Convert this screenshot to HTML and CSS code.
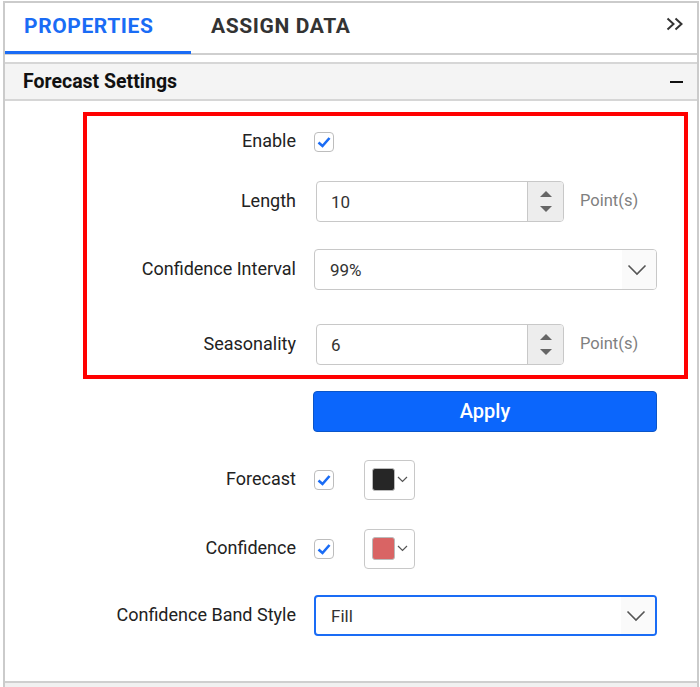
FILE: index.html
```html
<!DOCTYPE html>
<html>
<head>
<meta charset="utf-8">
<link rel="stylesheet" href="styles.css">
</head>
<body>
<div class="panel">
  <div class="tabs">
    <div class="tab tab-active">PROPERTIES</div>
    <div class="tab tab-second">ASSIGN DATA</div>
    <div class="collapse">
      <svg width="18" height="14" viewBox="0 0 18 14"><path d="M1.5 1.5 L7.5 7 L1.5 12.5 M9.5 1.5 L15.5 7 L9.5 12.5" fill="none" stroke="#333" stroke-width="2"/></svg>
    </div>
  </div>
  <div class="section-head">
    <span class="section-title">Forecast Settings</span>
    <span class="minus"></span>
  </div>
  <div class="form">
    <div class="row r-enable">
      <div class="label">Enable</div>
      <div class="control"><span class="check"><svg width="14" height="12" viewBox="0 0 14 12"><path d="M1.5 6.5 L5.5 10 L12.5 2" fill="none" stroke="#1a6cf5" stroke-width="2.6"/></svg></span></div>
    </div>
    <div class="row r-length">
      <div class="label">Length</div>
      <div class="control">
        <div class="numeric">
          <span class="num-val">10</span>
          <span class="spin"><span class="tri-up"></span><span class="tri-down"></span></span>
        </div>
        <span class="unit">Point(s)</span>
      </div>
    </div>
    <div class="row r-ci">
      <div class="label">Confidence Interval</div>
      <div class="control">
        <div class="dropdown">
          <span class="dd-val">99%</span>
          <span class="dd-icon"><svg width="20" height="12" viewBox="0 0 20 12"><path d="M1.5 1.5 L10 10 L18.5 1.5" fill="none" stroke="#555" stroke-width="1.6"/></svg></span>
        </div>
      </div>
    </div>
    <div class="row r-season">
      <div class="label">Seasonality</div>
      <div class="control">
        <div class="numeric">
          <span class="num-val">6</span>
          <span class="spin"><span class="tri-up"></span><span class="tri-down"></span></span>
        </div>
        <span class="unit">Point(s)</span>
      </div>
    </div>
    <div class="row r-apply">
      <div class="label"></div>
      <div class="control"><button class="apply">Apply</button></div>
    </div>
    <div class="row r-forecast">
      <div class="label">Forecast</div>
      <div class="control">
        <span class="check"><svg width="14" height="12" viewBox="0 0 14 12"><path d="M1.5 6.5 L5.5 10 L12.5 2" fill="none" stroke="#1a6cf5" stroke-width="2.6"/></svg></span>
        <div class="picker"><span class="swatch swatch-dark"></span><svg width="11" height="7" viewBox="0 0 11 7"><path d="M1 1 L5.5 5.5 L10 1" fill="none" stroke="#555" stroke-width="1.2"/></svg></div>
      </div>
    </div>
    <div class="row r-conf">
      <div class="label">Confidence</div>
      <div class="control">
        <span class="check"><svg width="14" height="12" viewBox="0 0 14 12"><path d="M1.5 6.5 L5.5 10 L12.5 2" fill="none" stroke="#1a6cf5" stroke-width="2.6"/></svg></span>
        <div class="picker"><span class="swatch swatch-red"></span><svg width="11" height="7" viewBox="0 0 11 7"><path d="M1 1 L5.5 5.5 L10 1" fill="none" stroke="#555" stroke-width="1.2"/></svg></div>
      </div>
    </div>
    <div class="row r-band">
      <div class="label">Confidence Band Style</div>
      <div class="control">
        <div class="dropdown dropdown-focus">
          <span class="dd-val">Fill</span>
          <span class="dd-icon"><svg width="20" height="12" viewBox="0 0 20 12"><path d="M1.5 1.5 L10 10 L18.5 1.5" fill="none" stroke="#555" stroke-width="1.6"/></svg></span>
        </div>
      </div>
    </div>
  </div>
  <div class="footer-line"></div>
  <div class="highlight"></div>
</div>
</body>
</html>
```
FILE: styles.css
```css
* { box-sizing: border-box; }
html, body { margin: 0; padding: 0; background: #fff; }
body {
  font-family: Roboto, "Liberation Sans", Arial, sans-serif;
  color: #222;
  width: 700px;
  height: 687px;
  overflow: hidden;
}
.panel {
  position: relative;
  margin: 1px 1px 0 3px;
  border: 2px solid #cbcbcb;
  border-bottom: none;
  height: 686px;
}
.tabs {
  display: flex;
  height: 52px;
  border-bottom: 2px solid #cfcfcf;
}
.tab {
  font-size: 21px;
  font-weight: 700;
  letter-spacing: 0.6px;
  padding-top: 11px;
  height: 50px;
}
.tab-active {
  width: 186px;
  padding-left: 19px;
  color: #1a6cf5;
  border-bottom: 3px solid #1a6cf5;
  height: 51px;
}
.tab-second {
  padding-left: 20px;
  color: #333;
}
.collapse {
  margin-left: auto;
  margin-right: 13px;
  padding-top: 13px;
}
.section-head {
  margin-top: 7px;
  height: 39px;
  background: #f4f4f4;
  border-top: 2px solid #d6d6d6;
  border-bottom: 2px solid #d6d6d6;
  display: flex;
  align-items: center;
  padding-left: 18px;
  padding-right: 14px;
}
.section-title {
  font-size: 19.5px;
  font-weight: 700;
  color: #111;
}
.minus {
  margin-left: auto;
  width: 13px;
  height: 2px;
  background: #111;
}
.form {
  padding-top: 20px;
  height: 580px;
}
.row {
  display: flex;
  align-items: center;
  height: 41px;
}
.label {
  width: 291px;
  text-align: right;
  font-size: 18px;
  color: #222;
  padding-bottom: 2px;
}
.control {
  margin-left: 18px;
  display: flex;
  align-items: center;
}
.r-length { margin-top: 19px; }
.r-ci { margin-top: 27px; }
.r-season { margin-top: 34px; }
.r-apply { margin-top: 26px; }
.r-forecast { margin-top: 27px; }
.r-conf { margin-top: 28px; }
.r-band { margin-top: 26px; }

.check {
  width: 20px;
  height: 20px;
  border: 1.5px solid #bdbdbd;
  border-radius: 4px;
  display: flex;
  align-items: center;
  justify-content: center;
  background: #fff;
}
.numeric {
  margin-left: 2px;
  width: 248px;
  height: 41px;
  border: 1.5px solid #c8c8c8;
  border-radius: 4px;
  display: flex;
  align-items: center;
  overflow: hidden;
}
.num-val {
  flex: 1;
  padding-left: 14px;
  font-size: 17px;
  color: #333;
}
.spin {
  width: 36px;
  height: 100%;
  background: #ededed;
  border-left: 1.5px solid #c8c8c8;
  display: flex;
  flex-direction: column;
  align-items: center;
  justify-content: space-around;
  padding: 4px 0;
}
.tri-up {
  width: 0; height: 0;
  border-left: 6px solid transparent;
  border-right: 6px solid transparent;
  border-bottom: 6px solid #666;
}
.tri-down {
  width: 0; height: 0;
  border-left: 6px solid transparent;
  border-right: 6px solid transparent;
  border-top: 6px solid #666;
}
.unit {
  margin-left: 16px;
  font-size: 16.5px;
  color: #808080;
  padding-bottom: 2px;
}
.dropdown {
  width: 343px;
  height: 41px;
  border: 1.5px solid #c8c8c8;
  border-radius: 4px;
  display: flex;
  align-items: center;
  overflow: hidden;
}
.dropdown-focus {
  border: 2px solid #1a6cf5;
}
.dd-val {
  flex: 1;
  padding-left: 15px;
  font-size: 17px;
  color: #333;
}
.dd-icon {
  width: 34px;
  height: 100%;
  background: #fafafa;
  display: flex;
  align-items: center;
  justify-content: center;
  padding-right: 4px;
}
.apply {
  margin-left: -1px;
  width: 344px;
  height: 41px;
  background: #0b66fc;
  border: 1.5px solid #0a55c9;
  border-radius: 4px;
  color: #fff;
  font-family: Roboto, "Liberation Sans", Arial, sans-serif;
  font-size: 20px;
  font-weight: 500;
  padding: 0 0 2px 0;
}
.picker {
  margin-left: 30px;
  width: 51px;
  height: 40px;
  border: 1.5px solid #c8c8c8;
  border-radius: 4px;
  display: flex;
  align-items: center;
  padding-left: 7px;
}
.swatch {
  width: 23px;
  height: 23px;
  border-radius: 3px;
  border: 1.5px solid #bbb;
  margin-right: 2px;
}
.swatch-dark { background: #262626; }
.swatch-red { background: #d96464; }
.footer-line {
  border-top: 2px solid #cfcfcf;
  background: #f1f1f1;
  height: 10px;
}
.highlight {
  position: absolute;
  left: 78px;
  top: 109px;
  width: 605px;
  height: 267px;
  border: 4px solid #ff0000;
  pointer-events: none;
}
```
